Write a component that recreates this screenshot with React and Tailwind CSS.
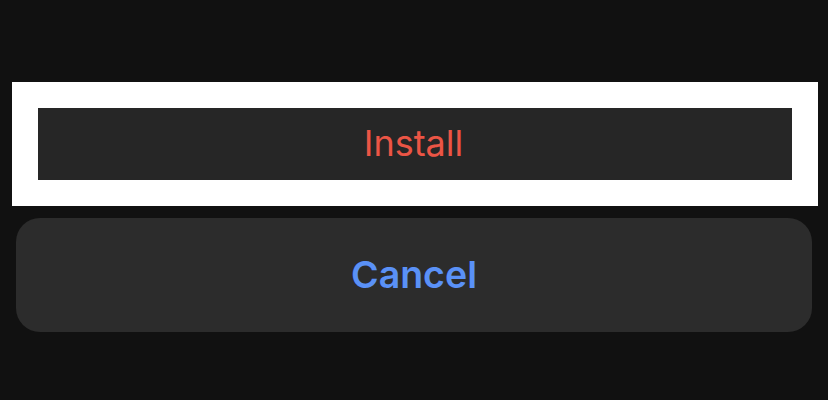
export default function App() {
  return (
    <div className="w-[828px] h-[400px] bg-[#111111] flex flex-col pt-[82px]" style={{ fontFamily: 'Inter, "Liberation Sans", sans-serif' }}>
      <div className="ml-[12px] w-[806px] bg-white p-[26px]">
        <div className="h-[72px] bg-[#262626] flex items-center justify-center">
          <span className="text-[36px] leading-none text-[#eb5545] pb-[2px] pr-[3px]">Install</span>
        </div>
      </div>
      <div className="mt-[12px] ml-[16px] w-[796px] h-[114px] rounded-[24px] bg-[#2c2c2c] flex items-center justify-center">
        <span className="text-[37.5px] leading-none font-semibold text-[#5a91f7]">Cancel</span>
      </div>
    </div>
  );
}
